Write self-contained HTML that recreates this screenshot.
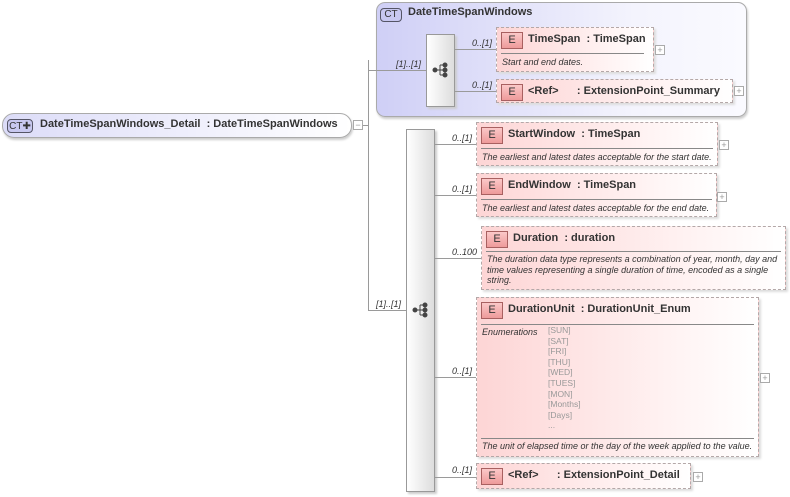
<!DOCTYPE html>
<html><head><meta charset="utf-8"><style>
body{margin:0;width:790px;height:497px;background:#fff;position:relative;overflow:hidden;font-family:"Liberation Sans",Arial,sans-serif;}
.a{position:absolute;}
.hl{position:absolute;height:1px;background:#9a9a9a;}
.vl{position:absolute;width:1px;background:#9a9a9a;}
.el{position:absolute;border:1px dashed #b4a8a8;background:linear-gradient(90deg,#fdd5d5,#fff3f3 70%,#fff);box-shadow:2px 2px 2px #ddd;box-sizing:border-box;}
.E{position:absolute;left:4px;top:4px;border:1px solid #a86060;background:linear-gradient(#fbc8c8,#ee9a9a);font-size:11px;text-align:center;line-height:15px;color:#333;box-sizing:border-box;width:22px;height:17px;}
.nm{position:absolute;left:31px;top:5px;font-size:11px;font-weight:bold;color:#333;white-space:nowrap;}
.sep{position:absolute;left:4px;right:4px;height:1px;background:#888;}
.ds{position:absolute;left:5px;font-size:9px;font-style:italic;color:#333;line-height:10.5px;white-space:nowrap;}
.pl{position:absolute;width:8px;height:8px;border:1px solid #aaa;background:#fff;font-size:9px;line-height:8px;text-align:center;color:#999;}
.lb{position:absolute;font-size:9px;font-style:italic;color:#333;}
.seq{position:absolute;border:1px solid #999;background:linear-gradient(90deg,#fff,#ddd);box-shadow:2px 2px 2px #ccc;box-sizing:border-box;}
.en{position:absolute;left:548px;font-size:8.5px;color:#999;line-height:10.6px;}
</style></head><body>
<div class="a" style="left:2px;top:113px;width:350px;height:25px;border:1px solid #aaa;border-radius:12px;background:linear-gradient(90deg,#dcdcf8,#fff);box-sizing:border-box;box-shadow:1px 2px 2px #ccc"></div>
<div class="a" style="left:7px;top:119px;width:26px;height:14px;border:1px solid #556;border-radius:4px;background:#c8c8f0;font-size:10px;line-height:13px;text-align:center;box-sizing:border-box;color:#333">CT✚</div>
<div class="a" style="left:40px;top:118px;font-size:11px;font-weight:bold;color:#333;white-space:nowrap">DateTimeSpanWindows_Detail&nbsp; : DateTimeSpanWindows</div>
<div class="pl" style="left:353px;top:120px">−</div>
<div class="hl" style="left:363px;top:125px;width:6px"></div>
<div class="vl" style="left:368px;top:60px;height:251px"></div>
<div class="a" style="left:376px;top:2px;width:371px;height:115px;border:1px solid #aaa;border-radius:9px;background:linear-gradient(90deg,#cfcff6,#f4f4fd 70%,#fafaff);box-sizing:border-box;box-shadow:1px 2px 2px #ccc"></div>
<div class="a" style="left:380px;top:8px;width:22px;height:14px;border:1px solid #556;border-radius:4px;background:#c8c8f0;font-size:10px;line-height:12px;text-align:center;box-sizing:border-box;color:#333">CT</div>
<div class="a" style="left:408px;top:6px;font-size:11px;font-weight:bold;color:#333">DateTimeSpanWindows</div>
<div class="hl" style="left:369px;top:70px;width:57px"></div>
<div class="lb" style="left:396px;top:59px">[1]..[1]</div>
<div class="seq" style="left:426px;top:34px;width:29px;height:73px"></div>
<svg class="a" style="left:431px;top:60px" width="20" height="20"><g fill="#444" stroke="#444"><circle cx="4" cy="10" r="2"/><line x1="4" y1="10" x2="9" y2="10"/><line x1="9" y1="5" x2="9" y2="15"/><line x1="9" y1="5" x2="14" y2="5"/><line x1="9" y1="10" x2="14" y2="10"/><line x1="9" y1="15" x2="14" y2="15"/><circle cx="14" cy="5" r="2"/><circle cx="14" cy="10" r="2"/><circle cx="14" cy="15" r="2"/></g></svg>
<div class="hl" style="left:455px;top:49px;width:41px"></div>
<div class="lb" style="left:472px;top:38px">0..[1]</div>
<div class="hl" style="left:455px;top:91px;width:41px"></div>
<div class="lb" style="left:472px;top:80px">0..[1]</div>
<div class="el" style="left:496px;top:27px;width:158px;height:45px"><div class="E">E</div><div class="nm" style="left:31px">TimeSpan&nbsp; : TimeSpan</div><div class="sep" style="top:25px;right:9px"></div><div class="ds" style="top:29px">Start and end dates.</div></div>
<div class="pl" style="left:655px;top:45px">+</div>
<div class="el" style="left:496px;top:79px;width:237px;height:24px"><div class="E">E</div><div class="nm" style="left:31px">&lt;Ref&gt;&nbsp;&nbsp;&nbsp;&nbsp;&nbsp; : ExtensionPoint_Summary</div></div>
<div class="pl" style="left:734px;top:86px">+</div>
<div class="hl" style="left:369px;top:310px;width:37px"></div>
<div class="lb" style="left:376px;top:299px">[1]..[1]</div>
<div class="seq" style="left:406px;top:129px;width:29px;height:363px"></div>
<svg class="a" style="left:411px;top:300px" width="20" height="20"><g fill="#444" stroke="#444"><circle cx="4" cy="10" r="2"/><line x1="4" y1="10" x2="9" y2="10"/><line x1="9" y1="5" x2="9" y2="15"/><line x1="9" y1="5" x2="14" y2="5"/><line x1="9" y1="10" x2="14" y2="10"/><line x1="9" y1="15" x2="14" y2="15"/><circle cx="14" cy="5" r="2"/><circle cx="14" cy="10" r="2"/><circle cx="14" cy="15" r="2"/></g></svg>
<div class="hl" style="left:435px;top:144px;width:41px"></div>
<div class="lb" style="left:452px;top:133px">0..[1]</div>
<div class="el" style="left:476px;top:122px;width:242px;height:44px"><div class="E">E</div><div class="nm">StartWindow&nbsp; : TimeSpan</div><div class="sep" style="top:25px"></div><div class="ds" style="top:29px">The earliest and latest dates acceptable for the start date.</div></div>
<div class="pl" style="left:719px;top:140px">+</div>
<div class="hl" style="left:435px;top:195px;width:41px"></div>
<div class="lb" style="left:452px;top:184px">0..[1]</div>
<div class="el" style="left:476px;top:173px;width:241px;height:44px"><div class="E">E</div><div class="nm">EndWindow&nbsp; : TimeSpan</div><div class="sep" style="top:25px"></div><div class="ds" style="top:29px">The earliest and latest dates acceptable for the end date.</div></div>
<div class="pl" style="left:717px;top:192px">+</div>
<div class="hl" style="left:435px;top:258px;width:46px"></div>
<div class="lb" style="left:452px;top:247px">0..100</div>
<div class="el" style="left:481px;top:226px;width:305px;height:64px"><div class="E">E</div><div class="nm">Duration&nbsp; : duration</div><div class="sep" style="top:24px"></div><div class="ds" style="top:27px">The duration data type represents a combination of year, month, day and<br>time values representing a single duration of time, encoded as a single<br>string.</div></div>
<div class="hl" style="left:435px;top:377px;width:41px"></div>
<div class="lb" style="left:452px;top:366px">0..[1]</div>
<div class="el" style="left:476px;top:297px;width:283px;height:160px"><div class="E">E</div><div class="nm">DurationUnit&nbsp; : DurationUnit_Enum</div><div class="sep" style="top:26px"></div><div class="ds" style="top:29px">Enumerations</div><div class="sep" style="top:140px"></div><div class="ds" style="top:143px">The unit of elapsed time or the day of the week applied to the value.</div></div>
<div class="en" style="top:325px">[SUN]<br>[SAT]<br>[FRI]<br>[THU]<br>[WED]<br>[TUES]<br>[MON]<br>[Months]<br>[Days]<br>...</div>
<div class="pl" style="left:760px;top:373px">+</div>
<div class="hl" style="left:435px;top:477px;width:41px"></div>
<div class="lb" style="left:452px;top:465px">0..[1]</div>
<div class="el" style="left:476px;top:463px;width:215px;height:26px"><div class="E">E</div><div class="nm">&lt;Ref&gt;&nbsp;&nbsp;&nbsp;&nbsp;&nbsp; : ExtensionPoint_Detail</div></div>
<div class="pl" style="left:693px;top:472px">+</div>
</body></html>
